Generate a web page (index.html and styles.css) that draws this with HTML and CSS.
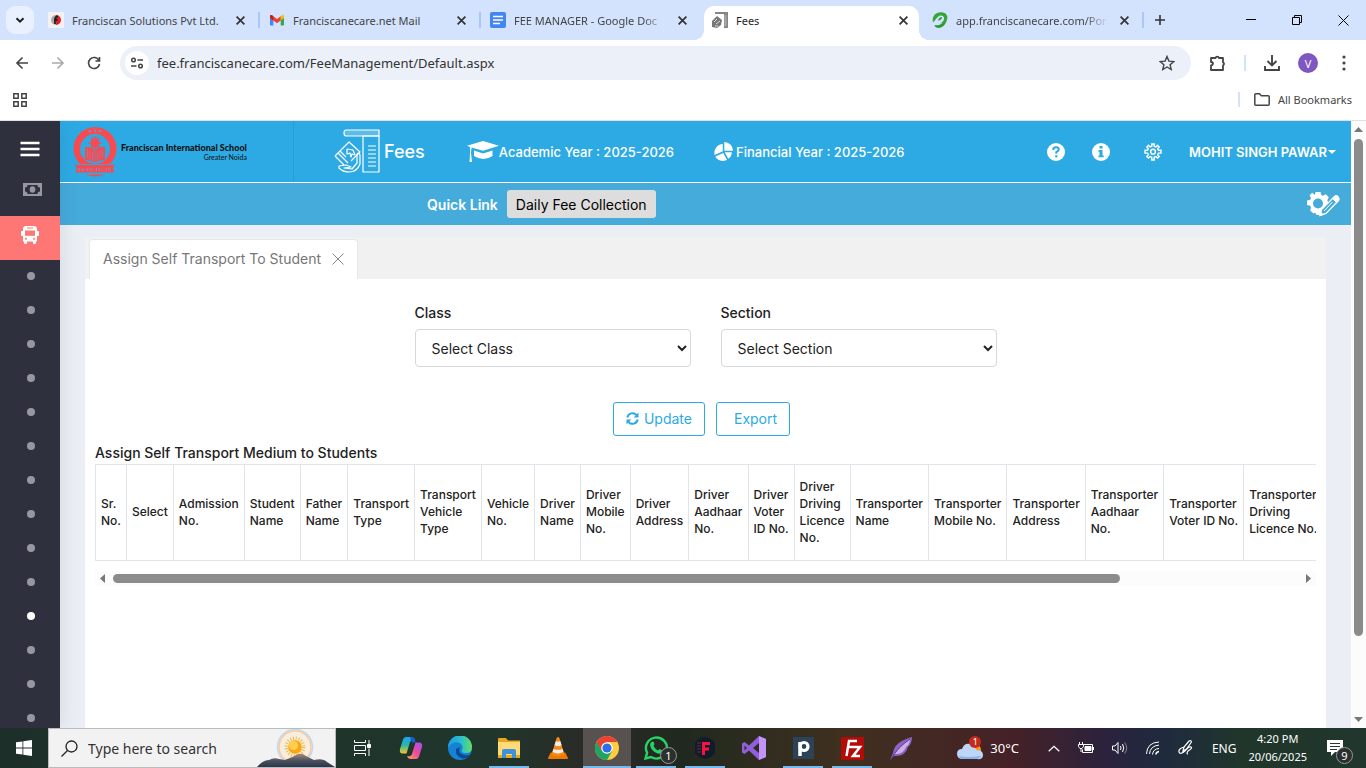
FILE: index.html
```html
<!DOCTYPE html>
<html lang="en">
<head>
    <meta charset="UTF-8">
    <meta name="viewport" content="width=device-width, initial-scale=1.0">
    <title>Fees</title>
    <link rel="stylesheet" href="styles.css">
</head>
<body>

    <!-- Browser tabs -->
    <div class="tab-strip">
        <button class="tab-search" aria-label="Search tabs">
            <svg width="10" height="10" viewBox="0 0 10 10"><path d="M1.5 3.2 5 6.7l3.500-3.500" fill="none" stroke="#1f1f1f" stroke-width="2"/></svg>
        </button>
        <div class="tabs">
            <div class="tab">
                <svg class="favicon" viewBox="0 0 16 16"><rect width="16" height="16" rx="1" fill="#f4f2f0"/><path d="M8 3a5 5 0 0 0 0 10z" fill="#aaa"/><path d="M8 3a5 5 0 0 1 0 10z" fill="#e0202a"/><path d="M7 12V7.500q0-3 3-3M6 8h3.500" fill="none" stroke="#222" stroke-width="1.800"/></svg>
                <span class="tab-title">Franciscan Solutions Pvt Ltd.</span>
                <button class="tab-close" aria-label="Close tab"><svg viewBox="0 0 8 8"><path d="m.5.500 7 7m0-7-7 7"/></svg></button>
            </div>
            <div class="tab">
                <svg class="favicon" viewBox="0 0 16 16"><path d="M1 4v8.500c0 .8.500 1 1 1h2.300V7z" fill="#4285f4"/><path d="M15 4v8.500c0 .8-.5 1-1 1h-2.300V7z" fill="#34a853"/><path d="M11.700 4.200 13 3.200c1-.7 2 0 2 1V6l-3.300 2.500z" fill="#fbbc04"/><path d="M1 6V4.200c0-1.200 1.200-1.700 2-1l5 3.800 3.700-2.800v4.300L8 11.200 4.300 8.500z" fill="#ea4335"/><path d="M1 6V4.200c0-1.200 1.200-1.700 2-1l1.300 1v4.300z" fill="#c5221f"/></svg>
                <span class="tab-title">Franciscanecare.net Mail</span>
                <button class="tab-close" aria-label="Close tab"><svg viewBox="0 0 8 8"><path d="m.5.500 7 7m0-7-7 7"/></svg></button>
            </div>
            <div class="tab tab-last">
                <svg class="favicon" viewBox="0 0 16 16"><rect width="16" height="16" rx="2" fill="#4285f4"/><path d="M3 4.500h10M3 8h10M3 11.500h7" stroke="#fff" stroke-width="1.700"/></svg>
                <span class="tab-title tab-fade">FEE MANAGER - Google Doc</span>
                <button class="tab-close" aria-label="Close tab"><svg viewBox="0 0 8 8"><path d="m.5.500 7 7m0-7-7 7"/></svg></button>
            </div>
            <div class="tab tab-active">
                <svg class="favicon" viewBox="0 0 16 16"><path d="M3 0h13v16h-4V2H3z" fill="#858585"/><path d="M12.500 3h2v11h-2z" fill="#aaa"/><path d="m0 9 5-5 5 4-1 5-4 3-5-1z" fill="#777"/><path d="m2 10 3-3m-1 5 4-3m-5 5h3" stroke="#ddd"/></svg>
                <span class="tab-title">Fees</span>
                <button class="tab-close" aria-label="Close tab"><svg viewBox="0 0 8 8"><path d="m.5.500 7 7m0-7-7 7"/></svg></button>
            </div>
            <div class="tab">
                <svg class="favicon" viewBox="0 0 16 16"><path d="M1 10.500C-.5 4 4 0 9.500.3 14 .5 16.500 4 15 7.500c-1 3-4 4-7 4 3-1.500 4.500-3.500 4-5.500C11.500 3.500 9 3 7 4 4.500 5.200 4 8 1 10.500z" fill="#35a635"/><path d="M2.500 13c4 1 8-1 12.500-5-1.500 5-5 8-8.500 8-2 0-4-1-4-3z" fill="#2f9a33"/><path d="M6 8.500c.5-2 2-3.500 4-3.500 0 2-1.500 3.500-4 3.500z" fill="#2f9a33"/></svg>
                <span class="tab-title tab-fade">app.franciscanecare.com/Por</span>
                <button class="tab-close" aria-label="Close tab"><svg viewBox="0 0 8 8"><path d="m.5.500 7 7m0-7-7 7"/></svg></button>
            </div>
        </div>
        <button class="new-tab" aria-label="New tab"><svg width="12" height="12" viewBox="0 0 12 12"><path d="M6 1v10M1 6h10" stroke="#333" stroke-width="1.600"/></svg></button>
        <div class="window-controls">
            <button aria-label="Minimize"><svg width="10" height="10" viewBox="0 0 10 10"><path d="M0 4.500h10" stroke="#000"/></svg></button>
            <button aria-label="Restore"><svg width="10" height="10" viewBox="0 0 10 10"><path d="M.5 2.500h7v7h-7zM2.500 2.500v-2h7v7h-2" fill="none" stroke="#000"/></svg></button>
            <button aria-label="Close"><svg width="11" height="11" viewBox="0 0 11 11"><path d="m.5.500 10 10m0-10-10 10" stroke="#000"/></svg></button>
        </div>
    </div>

    <!-- Address bar -->
    <div class="toolbar">
        <button class="nav-button" aria-label="Back"><svg width="14" height="14" viewBox="0 0 14 14"><path d="M13 7H2m5.500-5.500L2 7l5.500 5.500" fill="none" stroke="#444" stroke-width="1.600"/></svg></button>
        <button class="nav-button" aria-label="Forward"><svg width="14" height="14" viewBox="0 0 14 14"><path d="M1 7h11M6.500 1.500 12 7l-5.500 5.500" fill="none" stroke="#aaa" stroke-width="1.600"/></svg></button>
        <button class="nav-button" aria-label="Reload"><svg width="14" height="14" viewBox="0 0 14 14"><path d="M12 4.500A5.500 5.500 0 1 0 12.500 8M12.500 1v4h-4" fill="none" stroke="#444" stroke-width="1.600"/></svg></button>
        <div class="omnibox">
            <span class="site-info"><svg width="14" height="12" viewBox="0 0 14 12"><g fill="none" stroke="#444" stroke-width="1.500"><circle cx="3.500" cy="3" r="1.800"/><path d="M7.500 3H13M1 9h5.500"/><circle cx="10.500" cy="9" r="1.800"/></g></svg></span>
            <input type="text" class="url" aria-label="Address" value="fee.franciscanecare.com/FeeManagement/Default.aspx">
            <button class="star" aria-label="Bookmark this tab"><svg width="16" height="16" viewBox="0 0 16 16"><path d="m8 1.500 1.900 4.600 4.900.4-3.700 3.200 1.100 4.800L8 12l-4.200 2.500 1.100-4.800-3.700-3.200 4.900-.4z" fill="none" stroke="#444" stroke-width="1.400"/></svg></button>
        </div>
        <button class="nav-button" aria-label="Extensions"><svg width="18" height="18" viewBox="0 0 18 18"><path d="M2 4h4.500a1.800 1.800 0 0 1 3.500 0h4v4.300a1.600 1.600 0 0 1 0 3V16H2v-4.500q2-.3 2-1.800T2 8z" fill="none" stroke="#444" stroke-width="1.800" stroke-linejoin="round"/></svg></button>
        <span class="toolbar-line"></span>
        <button class="nav-button" aria-label="Downloads"><svg width="18" height="18" viewBox="0 0 18 18"><path d="M9 1v10M4.500 7 9 11.500 13.500 7M2 12v4h14v-4" fill="none" stroke="#444" stroke-width="1.900"/></svg></button>
        <button class="profile">V</button>
        <button class="nav-button" aria-label="Menu"><svg width="4" height="16" viewBox="0 0 4 16"><g fill="#444"><circle cx="2" cy="2" r="1.600"/><circle cx="2" cy="8" r="1.600"/><circle cx="2" cy="14" r="1.600"/></g></svg></button>
    </div>
    <div class="bookmarks">
        <button class="apps" aria-label="Apps"><svg width="14" height="14" viewBox="0 0 14 14"><path d="M.8.800h4.400v4.400H.8zM8.800.800h4.400v4.400H8.800zM.8 8.800h4.400v4.400H.8zM8.800 8.800h4.400v4.400H8.800z" fill="none" stroke="#444" stroke-width="1.500"/></svg></button>
        <button class="all-bookmarks">
            <svg width="16" height="13" viewBox="0 0 16 13"><path d="M.8 11.200V1.800q0-1 1-1h3.700l1.800 1.900h6.900q1 0 1 1v7.500q0 1-1 1H1.800q-1 0-1-1z" fill="none" stroke="#444" stroke-width="1.500"/></svg>
            All Bookmarks
        </button>
    </div>

    <!-- Fee management page -->
    <div class="page">
        <nav class="sidebar">
            <a href="#" class="menu-toggle" aria-label="Menu"><svg width="20" height="16" viewBox="0 0 20 16"><path d="M.5 2h19M.5 8h19M.5 14h19" stroke="#fff" stroke-width="2.600"/></svg></a>
            <a href="#" class="menu-money" aria-label="Fees"><svg width="19" height="13" viewBox="0 0 19 13"><rect width="19" height="13" fill="#97989f"/><path d="M4.500 2h10A2.500 2.500 0 0 0 17 4.500v4a2.500 2.500 0 0 0-2.500 2.500h-10A2.500 2.500 0 0 0 2 8.500v-4A2.500 2.500 0 0 0 4.500 2z" fill="#2f303e"/><ellipse cx="9.500" cy="6.500" rx="2.800" ry="3.300" fill="#97989f"/></svg></a>
            <a href="#" class="menu-bus" aria-label="Transport"><svg width="18" height="18" viewBox="0 0 18 18"><path d="M5 0h8q3 0 3 3v2h1q1 0 1 1v3q0 1-1 1h-1v5.500h-1V17q0 1-1 1h-1q-1 0-1-1v-1.500H6V17q0 1-1 1H4q-1 0-1-1v-1.500H2V10H1q-1 0-1-1V6q0-1 1-1h1V3q0-3 3-3z" fill="#fff"/><path d="M4 4.500h10v5.300H4z" fill="#ff7775"/><path d="M6 2h6" stroke="#ff7775"/><circle cx="5" cy="12.800" r="1" fill="#ff7775"/><circle cx="13" cy="12.800" r="1" fill="#ff7775"/></svg></a>
            <a href="#" class="dot" aria-label="Item 1"></a>
            <a href="#" class="dot" aria-label="Item 2"></a>
            <a href="#" class="dot" aria-label="Item 3"></a>
            <a href="#" class="dot" aria-label="Item 4"></a>
            <a href="#" class="dot" aria-label="Item 5"></a>
            <a href="#" class="dot" aria-label="Item 6"></a>
            <a href="#" class="dot" aria-label="Item 7"></a>
            <a href="#" class="dot" aria-label="Item 8"></a>
            <a href="#" class="dot" aria-label="Item 9"></a>
            <a href="#" class="dot" aria-label="Item 10"></a>
            <a href="#" class="dot dot-active" aria-label="Item 11"></a>
            <a href="#" class="dot" aria-label="Item 12"></a>
            <a href="#" class="dot" aria-label="Item 13"></a>
            <a href="#" class="dot" aria-label="Item 14"></a>
        </nav>

        <div class="main">
            <header class="header">
                <div class="school">
                    <svg width="44" height="50" viewBox="0 0 44 50">
                        <path d="M7 37A21.500 21.500 0 1 1 37 37z" fill="#f84b50"/>
                        <circle cx="22" cy="22" r="15" fill="#2daae4"/>
                        <g fill="#7d8cc0"><circle cx="17" cy="4.300" r="1.300"/><circle cx="22" cy="3.500" r="1.300"/><circle cx="27" cy="4.300" r="1.300"/></g>
                        <circle cx="22" cy="16" r="4.500" fill="#f84b50"/>
                        <path d="M22 9v14M15 16h14M17 11l10 10m0-10L17 21M19 9.500l6 13m0-13-6 13" stroke="#f84b50"/>
                        <path d="M12 20q5-1 10 3.500Q27 19 32 20v13q-5-.5-10 2.500-5-3-10-2.500z" fill="#f84b50"/>
                        <path d="M22 24v11M14.500 22.500v9M17 23v9.500M19.500 24.500V34M29.500 22.500v9M27 23v9.500M24.500 24.500V34" stroke="#8b86b8" stroke-width=".7"/>
                        <path d="M2 37.500h40L40 41.500l1.500 4h-39l1.500-4z" fill="#f84b50"/>
                        <path d="M3 37.500h38" stroke="#2daae4" stroke-width=".8"/>
                        <path d="M13 47.500h18q-9 4-18 0z" fill="#f84b50"/>
                        <text x="22" y="43.500" text-anchor="middle" class="crest-text">FRANCISCAN</text>
                    </svg>
                    <div class="school-name">Franciscan International School<small>Greater Noida</small></div>
                </div>
                <a href="#" class="brand">
                    <svg width="47" height="45" viewBox="0 0 47 45" fill="none" stroke="#fff" stroke-width="1.200" stroke-linejoin="round">
                        <path d="M12 1h33v6H12q-2 0-2-3t2-3z" fill="#5cbdea"/>
                        <path d="M29 7h16v36H29z"/>
                        <path d="M34 17h8M34 21h8M34 25h8M34 29h8M34 33h8M34 37h8"/>
                        <path d="M1 27 15 13l11 10-9 9M1 27l9 9M4 24l10 10M6 22l6 6"/>
                        <path d="m13 20 6 1 2 5-3-1-1 3-1-4-3 1zM5 37l7-1 5 2-7 1 8 1 5-6V25q2-2 3 1v9q-3 8-11 8-6 0-10-4z"/>
                    </svg>
                    <span>Fees</span>
                </a>
                <a href="#" class="year academic">
                    <svg width="32" height="22" viewBox="0 0 32 22" fill="#fff"><path d="M16 0 32 4.800 16 9.800 4.500 6.500 4 12l1 9H2.500L3 12V6L0 4.800zM7 9.500l9 3 9.500-3V15q-9 6-18.500 0z"/></svg>
                    <span>Academic Year : 2025-2026</span>
                </a>
                <a href="#" class="year financial">
                    <svg width="19" height="19" viewBox="0 0 19 19" fill="#fff"><path d="M10.300 0A8.700 8.700 0 0 1 19 8.700h-8.700zM8.800 2v7.300L.6 13A9 9 0 0 1 8.800 2zM9.300 11l3.700 7Q5 21 1.300 14.600zM10.800 10.300h7q0 4-3.500 6.500z"/></svg>
                    <span>Financial Year : 2025-2026</span>
                </a>
                <div class="header-tools">
                    <a href="#" aria-label="Help"><svg width="18" height="18" viewBox="0 0 18 18"><circle cx="9" cy="9" r="9" fill="#fff"/><path d="M6.200 7q0-2.700 2.800-2.700t2.800 2.300Q11.800 8 9.300 9.200v1.600" fill="none" stroke="#2daae4" stroke-width="2"/><path d="M8.200 12.200h2.200v2.200H8.200z" fill="#2daae4"/></svg></a>
                    <a href="#" aria-label="Information"><svg width="18" height="18" viewBox="0 0 18 18"><circle cx="9" cy="9" r="9" fill="#fff"/><path d="M7.500 3h3v2.500h-3zM6.500 7h4v5.500h1.200v1.800H6.500v-1.800h1V8.700h-1z" fill="#2daae4"/></svg></a>
                    <a href="#" class="settings" aria-label="Settings"><svg width="18" height="18" viewBox="0 0 18 18" fill="none" stroke="#fff" stroke-width="1.400"><path d="M7.800 1h2.400v2.200l1.700.7 1.600-1.600 1.700 1.700-1.500 1.600.7 1.700H17v2.800h-2.600l-.7 1.700 1.500 1.600-1.700 1.700-1.600-1.500-1.700.7V17H7.800v-2.700l-1.700-.7-1.600 1.500-1.700-1.700 1.500-1.600-.7-1.700H1V7.300h2.600l.7-1.700L2.800 4l1.700-1.700 1.600 1.600 1.700-.7z"/><circle cx="9" cy="8.700" r="2.400"/></svg></a>
                    <a href="#" class="user">MOHIT SINGH PAWAR<span class="caret"></span></a>
                </div>
            </header>

            <div class="quick-bar">
                <strong>Quick Link</strong>
                <button class="quick-button">Daily Fee Collection</button>
                <a href="#" class="quick-settings" aria-label="Edit quick links">
                    <svg width="34" height="26" viewBox="0 0 34 26"><path d="m9.500 1h5l.8 3 1.700.8 2.800-1.500 3 3-1.500 2.900.8 1.800 2.500.8v3l-9 9-5 .2-1.200-2.200-2 .8-3.200-3L5 16.500l-.8-1.700-3.200-.9V9.500L4.200 8.700 5 7 3.500 4.200 6.200 1.800 8.800 4z" fill="#fff"/><circle cx="12" cy="12.500" r="5" fill="#44abdb"/><path d="M28.500 5.500q2-1.500 3.500.5t.5 3.500L20 22.500l-6 2 1.500-6z" fill="#44abdb" stroke="#fff" stroke-width="1.400"/><path d="m26.500 7.500 4 4 2-2q1-2-.5-3.500t-3.500-.5zM14 24.500l1-3 2 2z" fill="#fff" stroke="#fff"/><path d="m18 20 8.500-9" stroke="#fff"/></svg>
                </a>
            </div>

            <main class="content">
                <div class="card-tabs">
                    <div class="card-tab">
                        <a href="#">Assign Self Transport To Student</a>
                        <button aria-label="Close"><svg width="12" height="12" viewBox="0 0 12 12"><path d="m.5.500 11 11m0-11-11 11" stroke="#888"/></svg></button>
                    </div>
                </div>
                <div class="card">
                    <form class="filters">
                        <div class="field">
                            <label for="class">Class</label>
                            <select id="class"><option>Select Class</option></select>
                        </div>
                        <div class="field">
                            <label for="section">Section</label>
                            <select id="section"><option>Select Section</option></select>
                        </div>
                    </form>
                    <div class="actions">
                        <button class="outline-button">
                            <svg width="13" height="13" viewBox="0 0 13 13"><path d="M1.300 5.500A5.300 5.300 0 0 1 10.500 3M11.700 7.500A5.300 5.300 0 0 1 2.500 10" fill="none" stroke="#2daae4" stroke-width="2"/><path d="M12.500.500v5H7.700zM.5 12.500v-5h4.800z" fill="#2daae4"/></svg>
                            Update
                        </button>
                        <button class="outline-button export">Export</button>
                    </div>
                    <h2>Assign Self Transport Medium to Students</h2>
                    <div class="table-scroll">
                        <table>
                            <thead>
                                <tr>
                                    <th>Sr. No.</th>
                                    <th>Select</th>
                                    <th>Admission No.</th>
                                    <th>Student Name</th>
                                    <th>Father Name</th>
                                    <th>Transport Type</th>
                                    <th>Transport Vehicle Type</th>
                                    <th>Vehicle No.</th>
                                    <th>Driver Name</th>
                                    <th>Driver Mobile No.</th>
                                    <th>Driver Address</th>
                                    <th>Driver Aadhaar No.</th>
                                    <th>Driver Voter ID&nbsp;No.</th>
                                    <th>Driver Driving Licence No.</th>
                                    <th>Transporter Name</th>
                                    <th>Transporter Mobile No.</th>
                                    <th>Transporter Address</th>
                                    <th>Transporter Aadhaar No.</th>
                                    <th>Transporter Voter&nbsp;ID&nbsp;No.</th>
                                    <th>Transporter Driving Licence&nbsp;No.</th>
                                </tr>
                            </thead>
                        </table>
                    </div>
                    <div class="scroll-x">
                        <svg width="5" height="9" viewBox="0 0 5 9"><path d="M5 0v9L0 4.500z" fill="#777"/></svg>
                        <div class="track-x"><div class="thumb-x"></div></div>
                        <svg width="5" height="9" viewBox="0 0 5 9"><path d="M0 0v9l5-4.500z" fill="#777"/></svg>
                    </div>
                </div>
            </main>
        </div>

        <div class="scroll-y">
            <svg width="9" height="5" viewBox="0 0 9 5"><path d="M0 5h9L4.500 0z" fill="#777"/></svg>
            <div class="track-y"><div class="thumb-y"></div></div>
            <svg width="9" height="5" viewBox="0 0 9 5"><path d="M0 0h9L4.500 5z" fill="#777"/></svg>
        </div>
    </div>

    <!-- Windows taskbar -->
    <div class="taskbar">
        <button class="start" aria-label="Start"><svg width="16" height="16" viewBox="0 0 16 16"><path d="m0 2.300 6.500-.9v6.200H0zM7.300 1.300 16 0v7.600H7.300zM0 8.400h6.500v6.200L0 13.700zM7.300 8.400H16V16l-8.700-1.300z" fill="#fff"/></svg></button>
        <div class="search">
            <svg width="17" height="17" viewBox="0 0 17 17"><circle cx="10.500" cy="6.500" r="5.500" fill="none" stroke="#222" stroke-width="1.300"/><path d="m6.500 10.500-6 6" stroke="#222" stroke-width="1.300"/></svg>
            <input type="text" placeholder="Type here to search" aria-label="Search">
            <svg width="78" height="38" viewBox="0 0 78 38">
                <defs><linearGradient id="hill" x1="0" y1="0" x2="0" y2="1"><stop offset="0" stop-color="#a88a7c"/><stop offset=".5" stop-color="#4d5360"/><stop offset="1" stop-color="#28364a"/></linearGradient></defs>
                <circle cx="38" cy="18" r="17.500" fill="none" stroke="#b9dcf5" stroke-width="1.500"/>
                <circle cx="38" cy="18" r="16" fill="#f6efe0" stroke="#ffc79c" stroke-width="1.500"/>
                <circle cx="38" cy="18" r="8.500" fill="none" stroke="#f5b947" stroke-width="4" stroke-dasharray="1 1.700"/>
                <circle cx="38" cy="18" r="6.800" fill="#f9a815"/><circle cx="36.500" cy="16.500" r="4.500" fill="#ffce4f"/>
                <path d="M0 38q6-7 12-7 5-3 10-1l6 1q8-3 13-6 5-1 8 2l8 4q9-2 13 2l8 5z" fill="url(#hill)"/>
            </svg>
        </div>
        <div class="task-apps">
            <button class="app" aria-label="Task View"><svg width="17" height="16" viewBox="0 0 17 16" fill="none" stroke="#fff"><path d="M.5 0v2.500h11V0M.5 16v-2.500h11V16M.5 5.500h11v5H.5zM15 0v4M15 8.500V16"/><path d="M13.500 4.500h3v3h-3z" fill="#fff"/></svg></button>
            <button class="app" aria-label="Copilot"><svg width="24" height="24" viewBox="0 0 24 24"><defs><linearGradient id="cop1" x1="0" y1="0" x2="0" y2="1"><stop offset="0" stop-color="#18a5f5"/><stop offset=".5" stop-color="#2cb7a3"/><stop offset="1" stop-color="#f5c927"/></linearGradient><linearGradient id="cop2" x1="1" y1="0" x2="0" y2="1"><stop offset="0" stop-color="#a050f5"/><stop offset=".5" stop-color="#ea4c9c"/><stop offset="1" stop-color="#ffa254"/></linearGradient></defs><path d="M16 4q-.8-3-4-3H7Q4.500 1 3.500 5L1 13q-1 4.500 3 4.500h3.500L11 6q1-3 5-2z" fill="url(#cop1)"/><path d="M8 20q.8 3 4 3h5q2.500 0 3.500-4l2.500-8q1-4.500-3-4.500h-3.500L13 18q-1 3-5 2z" fill="url(#cop2)"/><path d="M12 1q3 0 4 3l.8 2.500h-4L11 1z" fill="#1859ce"/></svg></button>
            <button class="app" aria-label="Edge"><svg width="24" height="24" viewBox="0 0 24 24"><defs><linearGradient id="edge1"><stop offset="0" stop-color="#1b9de2"/><stop offset=".55" stop-color="#2ac0cf"/><stop offset="1" stop-color="#65dc5c"/></linearGradient></defs><circle cx="12" cy="12" r="12" fill="#1582d5"/><path d="M0 11.500A12 12 0 0 1 24 11q0 6-6 6-5 0-4-3 2-4-2-7Q6 4 0 11.500z" fill="url(#edge1)"/><path d="M8 13q-1 8 7 9.500 4 .5 7-4-5 2-9-1-3-2-1-6-3 0-4 1.500z" fill="#0c4a94"/></svg></button>
            <button class="app app-open" aria-label="File Explorer"><svg width="22" height="20" viewBox="0 0 22 20"><path d="M0 1q0-1 1-1h7l2 2.500h12V20H0z" fill="#e8a71c"/><path d="M0 4h22v13H0z" fill="#ffda76"/><path d="M4 20v-7q0-2 2-2h10q2 0 2 2v7h-4v-4H8v4z" fill="#3c93dc"/></svg></button>
            <button class="app" aria-label="VLC"><svg width="20" height="24" viewBox="0 0 22 24"><path d="M3 17h16l3 6q0 1-1 1H1q-1 0-1-1z" fill="#ef7900"/><path d="M9.500 1q1.500-2 3 0L18 19q-7 4-14 0z" fill="#f78b12"/><path d="m8.600 4.500-1.400 4.500q4 2 7.800 0l-1.400-4.500q-2.500 1-5 0zM6 13l-1 3.500q6 3 12 0L16 13q-5 2-10 0z" fill="#eee"/></svg></button>
            <button class="app app-open app-current" aria-label="Chrome"><svg width="24" height="24" viewBox="0 0 24 24"><circle cx="12" cy="12" r="12" fill="#ffcd40"/><path d="M12 12 1.600 6A12 12 0 0 0 12 24l5.200-9z" fill="#20a464"/><path d="M22.400 6H12l-5.200 9L1.600 6A12 12 0 0 1 22.400 6z" fill="#ea4335"/><circle cx="12" cy="12" r="5.800" fill="#fff"/><circle cx="12" cy="12" r="4.600" fill="#2c6fe6"/></svg></button>
            <button class="app app-open" aria-label="WhatsApp"><svg width="24" height="24" viewBox="0 0 24 24"><path d="m1.500 22.500 1.600-5.700A10.500 10.500 0 1 1 7 21z" fill="none" stroke="#25d366" stroke-width="2.400"/><path d="M7.500 6q2-1.500 3 2l-1 2q1.500 3 4.500 4.500l1.500-1.500q3 1 2.500 2.500-1 3-4.500 2Q7 15 6 9q0-2 1.500-3z" fill="#25d366"/></svg><span class="app-badge">1</span></button>
            <button class="app app-open" aria-label="F"><svg width="22" height="22" viewBox="0 0 22 22"><path d="M11 0q8 2 10 6v10q-4 5-10 6Q4 20 1 16V6q3-5 10-6z" fill="#101b2b"/><path d="M8 5h8v3h-5v2.500h4v3h-4V18H8z" fill="#f7153f"/><path d="M3 6h4M3 9h4M3 12h4M3 15h4" stroke="#7a2440"/></svg></button>
            <button class="app" aria-label="Visual Studio"><svg width="24" height="24" viewBox="0 0 24 24"><path d="M0 7.500 2.500 6 7 9.500 17 0l7 3v18l-7 3L7 14.500 2.500 18 0 16.500zM17 7l-6 5 6 5zM2.500 9.500v5L5 12z" fill="#925edc" fill-rule="evenodd"/><path d="m17 0 7 3v18l-7 3z" fill="#c294f7"/></svg></button>
            <button class="app app-open" aria-label="P"><svg width="21" height="22" viewBox="0 0 21 22"><path d="M0 0h21v22H0z" fill="#2c4257"/><path d="M7 5v14" stroke="#fff" stroke-width="3.500"/><circle cx="11" cy="9.500" r="4" fill="none" stroke="#fff" stroke-width="3.200"/></svg></button>
            <button class="app app-open" aria-label="FileZilla"><svg width="23" height="23" viewBox="0 0 23 23"><path d="M0 0h23v23H0z" fill="#b40a08"/><path d="M5.500 19 8 4h8M6 10h8M13 10h6l-7 9h7" fill="none" stroke="#fff" stroke-width="2.500"/></svg></button>
            <button class="app" aria-label="Notes"><svg width="22" height="23" viewBox="0 0 22 23"><path d="M22 0Q4 5 3 16l-3 7 4-4q11 1 14-9 4-3 4-10z" fill="#8f62c4"/><path d="M20 2Q11 8 4 17q9 1 12-7 4-3 4-8z" fill="#cbb0ea"/><path d="M20 2Q8 10 1 22" stroke="#5c3596" fill="none"/></svg></button>
        </div>
        <div class="tray">
            <div class="weather">
                <svg width="26" height="24" viewBox="0 0 26 24"><circle cx="18" cy="14" r="6" fill="#f79a1c"/><path d="M6 23q-6 0-6-5t5-5q2-6 8-5t6 6q7 0 7 5t-6 4z" fill="#bdd5f6"/><path d="M2 20q8 2 22 0-1 3-5 3H6q-3 0-4-3z" fill="#8cb2ea"/></svg>
                <span class="weather-badge">1</span>
                <span>30°C</span>
            </div>
            <svg width="12" height="7" viewBox="0 0 12 7"><path d="m.7 6.300 5.300-5 5.300 5" fill="none" stroke="#fff" stroke-width="1.300"/></svg>
            <svg width="16" height="12" viewBox="0 0 16 12" fill="none" stroke="#fff"><path d="M5.500 2.500h9v8h-10v-3M15.500 5v3M1.500 0v2M4.500 0v2M.5 2.500h5v2l-1.500 2H2l-1.500-2zM3 6.500V10"/><path d="M7 4.500h6v4H7z" fill="#fff"/></svg>
            <svg width="16" height="14" viewBox="0 0 16 14" fill="none" stroke="#fff"><path d="M.5 5h2.500l3-3.500v11L3 9H.5zM8.500 5q1 2 0 4"/><path d="M10.500 3q2.500 4 0 8"/><path d="M12.700 1.500q4 5.500 0 11" stroke="#888"/></svg>
            <svg width="14" height="14" viewBox="0 0 14 14" fill="none" stroke="#fff"><path d="M.5 13Q1 1.500 13 1M3.500 13Q4 5 13 4M6.500 13.500Q7 8 13 7.500"/><path d="M10 13.500q0-2.500 3-3" stroke-width="1.500"/></svg>
            <svg width="16" height="16" viewBox="0 0 16 16" fill="none" stroke="#fff" stroke-width="1.200"><path d="m5 11 1-4 5-6q2-1 2.500 1l-5 7zM6 7q-6 2-5 5t6-1q4-5 6-4t-3 4q-2 3 0 3"/></svg>
            <span>ENG</span>
            <time class="clock"><span>4:20 PM</span><span>20/06/2025</span></time>
            <button class="notes" aria-label="Notifications"><svg width="16" height="17" viewBox="0 0 16 17"><path d="M0 0h16v12H8l-4 4v-4H0z" fill="#fff"/><path d="M3 3.500h10M3 6.500h10M3 9.500h7" stroke="#2a3832"/></svg><span class="app-badge notes-badge">9</span></button>
        </div>
    </div>

</body>
</html>
```

FILE: styles.css
```css
/* Basic styling for the page */
* {
    box-sizing: border-box;
}
body {
    margin: 0;
    height: 100vh;
    display: flex;
    flex-direction: column;
    overflow: hidden;
    font-family: "Noto Sans", sans-serif;
    font-size: 11px;
    color: #444;
    background: #fff;
}
button {
    display: flex;
    align-items: center;
    justify-content: center;
    padding: 0;
    border: none;
    background: none;
    font: inherit;
    color: inherit;
}
input {
    border: none;
    outline: none;
    background: none;
    min-width: 0;
}
a {
    color: inherit;
    text-decoration: none;
}
svg {
    flex: none;
    display: block;
}

/* Tab strip */
.tab-strip {
    flex: none;
    height: 40px;
    display: flex;
    background: #d3e3fd;
}
.tab-search {
    width: 28px;
    height: 28px;
    margin: 6px 5px 6px 6px;
    border-radius: 9px;
    background: #e9f0fe;
}
.tabs {
    flex: 0 1 1105px;
    min-width: 0;
    display: flex;
    padding-top: 6px;
}
.tab {
    flex: 1 1 221px;
    min-width: 0;
    display: flex;
    align-items: center;
    height: 28px;
    padding: 0 14px 0 9px;
    background: linear-gradient(#a8c7fa, #a8c7fa) right center / 2px 16px no-repeat;
}
.tab-last {
    background: none;
}
.tab-active {
    position: relative;
    flex-basis: 215px;
    height: 34px;
    margin: 0 4px 0 2px;
    padding: 0 10px 6px 8px;
    border-radius: 10px 10px 0 0;
    background: #fff;
    color: #1f1f1f;
}
.tab-active::before,
.tab-active::after {
    content: "";
    position: absolute;
    bottom: 0;
    width: 10px;
    height: 10px;
}
.tab-active::before {
    right: 100%;
    background: radial-gradient(circle at 0 0, transparent 10px, #fff 10px);
}
.tab-active::after {
    left: 100%;
    background: radial-gradient(circle at 100% 0, transparent 10px, #fff 10px);
}
.favicon {
    width: 16px;
    height: 16px;
    margin-right: 8px;
}
.tab-title {
    flex: 1;
    overflow: hidden;
    white-space: nowrap;
}
.tab-fade {
    mask-image: linear-gradient(to right, #000 85%, transparent);
}
.tab-close {
    width: 12px;
    margin-left: 10px;
}
.tab-close svg {
    width: 9px;
    height: 9px;
    stroke: #333;
    stroke-width: 1.5;
}
.new-tab {
    width: 32px;
}
.window-controls {
    display: flex;
    margin-left: auto;
}
.window-controls button {
    width: 46px;
}

/* Toolbar and bookmarks */
.toolbar {
    flex: none;
    display: flex;
    align-items: center;
    height: 46px;
    padding: 0 4px;
}
.nav-button {
    width: 36px;
    height: 34px;
}
.omnibox {
    flex: 1;
    display: flex;
    align-items: center;
    height: 34px;
    margin: 0 9px 0 8px;
    padding: 0 12px 0 5px;
    border-radius: 17px;
    background: #ecf0f9;
}
.site-info {
    display: flex;
    align-items: center;
    justify-content: center;
    width: 24px;
    height: 24px;
    border-radius: 50%;
    background: #fff;
}
.url {
    flex: 1;
    padding: 0 8px;
    font-family: "Noto Sans", sans-serif;
    font-size: 13px;
    color: #333;
}
.star {
    width: 24px;
}
.toolbar-line {
    width: 2px;
    height: 16px;
    margin: 0 8px;
    background: #d3e3fd;
}
.profile {
    width: 20px;
    height: 20px;
    margin: 0 8px;
    border-radius: 50%;
    background: #7e57c2;
    color: #fff;
}
.bookmarks {
    flex: none;
    display: flex;
    align-items: center;
    justify-content: space-between;
    height: 35px;
    padding: 0 14px 7px 13px;
    border-bottom: 1px solid #dfe1e5;
}
.all-bookmarks {
    gap: 8px;
    padding-left: 16px;
    background: linear-gradient(#d3e3fd, #d3e3fd) left center / 2px 16px no-repeat;
}

/* Page frame */
.page {
    flex: 1;
    min-height: 0;
    display: flex;
    overflow: hidden;
    font-family: Inter, sans-serif;
    font-size: 14px;
    color: #222;
}
.sidebar {
    flex: none;
    width: 60px;
    z-index: 1;
    background: #2f303e;
    box-shadow: 0 0 20px rgba(60, 70, 90, 0.15);
}
.sidebar a {
    display: flex;
    align-items: center;
    justify-content: center;
}
.menu-toggle {
    height: 56px;
}
.menu-money {
    height: 24px;
    margin-bottom: 15px;
    padding-left: 5px;
}
.menu-bus {
    height: 44px;
    padding-bottom: 6px;
    background: #ff7775;
}
.dot {
    height: 34px;
    padding: 0 0 3px 1px;
}
.dot::before {
    content: "";
    width: 8px;
    height: 8px;
    border-radius: 50%;
    background: #97989f;
}
.dot-active::before {
    background: #fff;
}
.main {
    flex: 1;
    min-width: 0;
    display: flex;
    flex-direction: column;
    background: #ebeff5;
}

/* Header */
.header {
    flex: none;
    display: flex;
    align-items: center;
    height: 62px;
    border-bottom: 1px solid #fff;
    background: #2daae4;
    color: #fff;
    font-weight: 500;
}
.school {
    display: flex;
    align-items: center;
    gap: 4px;
    width: 234px;
    height: 100%;
    padding-left: 13px;
    border-right: 1px solid #289dd5;
}
.school-name {
    font-family: Lato, sans-serif;
    font-size: 9px;
    font-weight: 900;
    line-height: 10px;
    color: #111;
}
.school-name small {
    display: block;
    font-size: 7px;
    font-weight: 400;
    line-height: 8px;
    text-align: right;
}
.crest-text {
    font: bold 5px "Liberation Serif", serif;
    fill: #8b86b8;
}
.brand {
    display: flex;
    align-items: center;
    gap: 3px;
    margin-left: 40px;
    font-size: 18px;
}
.year {
    display: flex;
    align-items: center;
    font-size: 13px;
}
.academic {
    margin-left: 42px;
}
.financial {
    gap: 3px;
    margin-left: 40px;
}
.header-tools {
    display: flex;
    align-items: center;
    gap: 27px;
    margin-left: auto;
    padding-right: 15px;
}
.settings {
    margin-left: 7px;
}
.user {
    display: flex;
    align-items: center;
    gap: 1px;
    font-size: 13px;
    font-weight: 600;
}
.caret {
    border: 4px solid transparent;
    border-top-color: #fff;
    border-bottom: none;
}

/* Quick link bar */
.quick-bar {
    flex: none;
    display: flex;
    align-items: center;
    gap: 9px;
    height: 42px;
    padding: 0 11px 0 367px;
    background: #44abdb;
    color: #fff;
}
.quick-bar strong {
    font-weight: 600;
}
.quick-button {
    height: 28px;
    padding: 0 9px;
    border-radius: 3px;
    background: #ddd;
    color: #000;
}
.quick-settings {
    margin-left: auto;
}

/* Content card */
.content {
    flex: 1;
    display: flex;
    flex-direction: column;
    min-width: 0;
    padding: 12px 25px 0;
}
.card-tabs {
    display: flex;
    height: 42px;
    padding: 2px 4px 0;
    background: #f1f1f1;
}
.card-tab {
    display: flex;
    align-items: center;
    gap: 11px;
    padding: 0 13px 2px;
    border: 1px solid #e4e8ec;
    border-bottom: none;
    border-radius: 4px 4px 0 0;
    background: #fff;
    color: #777;
}
.card {
    flex: 1;
    padding: 24px 10px 0;
    background: #fff;
}
.filters {
    display: grid;
    grid-template-columns: 276px 276px;
    justify-content: center;
    gap: 30px;
}
.field label {
    display: block;
    line-height: 20px;
    margin-bottom: 6px;
    font-weight: 500;
}
.field select {
    width: 100%;
    height: 38px;
    padding: 0 12px;
    border: 1px solid #d5d8dc;
    border-radius: 4px;
    background: #fff;
    color: #222;
    font: inherit;
}
.actions {
    display: flex;
    justify-content: center;
    gap: 11px;
    padding: 35px 8px 7px 0;
}
.outline-button {
    gap: 5px;
    height: 34px;
    padding: 0 12px 2px;
    border: 1px solid #2daae4;
    border-radius: 3px;
    background: #fff;
    color: #2daae4;
}
.export {
    padding-left: 17px;
}
.card h2 {
    margin: 0;
    font-size: 14px;
    line-height: 20px;
    font-weight: 500;
}

/* Students table */
.table-scroll {
    overflow: hidden;
    margin-top: 1px;
}
table {
    width: 100%;
    height: 97px;
    border-collapse: collapse;
}
th {
    padding: 0 5px 2px;
    border: 1px solid #e1e4e8;
    font-size: 12px;
    line-height: 17px;
    font-weight: 500;
    text-align: left;
}

/* Scrollbars */
.scroll-x {
    display: flex;
    align-items: center;
    gap: 8px;
    height: 15px;
    margin-top: 10px;
    padding: 0 5px;
    background: #fcfcfc;
}
.track-x {
    flex: 1;
}
.thumb-x {
    width: 85%;
    height: 9px;
    border-radius: 5px;
    background: #8b8b8b;
}
.scroll-y {
    flex: none;
    display: flex;
    flex-direction: column;
    align-items: center;
    gap: 7px;
    width: 15px;
    padding: 6px 0;
    background: #fcfcfc;
}
.track-y {
    flex: 1;
}
.thumb-y {
    width: 9px;
    height: 87%;
    border-radius: 5px;
    background: #8b8b8b;
}

/* Taskbar */
.taskbar {
    flex: none;
    display: flex;
    height: 40px;
    color: #fff;
    font-size: 12px;
    background: linear-gradient(to right, #1d2f29, #20362c 36%, #2b2926 44%, #20291f 50%, #40301f 62%, #452127 74%, #2b223d 81%, #1f2a3e 85%, #20362b 91%, #21372d);
}
.start {
    width: 48px;
}
.search {
    display: flex;
    align-items: center;
    width: 288px;
    padding-left: 12px;
    border: 1px solid #bbb;
    background: #f2f2f2;
}
.search input {
    flex: 1;
    padding: 0 0 0 10px;
    font-family: "Noto Sans", sans-serif;
    font-size: 14px;
}
.search input::placeholder {
    color: #333;
}
.task-apps {
    display: flex;
    gap: 1px;
    padding-left: 2px;
}
.app {
    position: relative;
    width: 48px;
}
.app-open {
    background: linear-gradient(#76b9ed, #76b9ed) center bottom / 40px 2px no-repeat;
}
.app-current {
    background-color: #57524f;
    background-size: 48px 2px;
}
.app-badge {
    position: absolute;
    right: 3px;
    bottom: 4px;
    width: 17px;
    height: 17px;
    border: 1px solid #999;
    border-radius: 50%;
    background: #2b302e;
    color: #fff;
    font-size: 11px;
    line-height: 15px;
    text-align: center;
}
.tray {
    display: flex;
    align-items: center;
    gap: 18px;
    margin-left: auto;
    padding-right: 13px;
}
.weather {
    position: relative;
    display: flex;
    align-items: center;
    gap: 7px;
    margin-right: 11px;
    font-size: 13px;
}
.weather-badge {
    position: absolute;
    left: 12px;
    top: 0;
    width: 12px;
    height: 12px;
    border-radius: 50%;
    background: #c42b1c;
    font-size: 9px;
    line-height: 12px;
    text-align: center;
}
.clock {
    display: flex;
    flex-direction: column;
    align-items: center;
    margin: 0 2px 0 -6px;
    font-size: 11px;
    line-height: 18px;
}
.notes {
    position: relative;
    width: 26px;
    height: 40px;
    justify-content: flex-start;
}
.notes-badge {
    right: 0;
}
```
